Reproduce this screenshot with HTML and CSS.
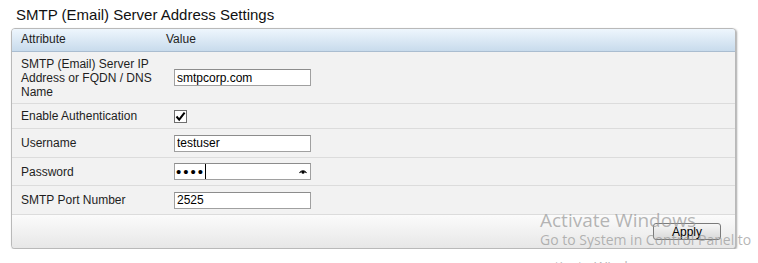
FILE: index.html
```html
<!DOCTYPE html>
<html lang="en">
<head>
  <meta charset="UTF-8">
  <meta name="viewport" content="width=device-width, initial-scale=1.0">
  <title>SMTP Settings</title>
  <link rel="stylesheet" href="styles.css">
</head>
<body>
  <h1 class="title">SMTP (Email) Server Address Settings</h1>

  <div class="panel">
    <div class="row head">
      <div class="attr">Attribute</div>
      <div class="value">Value</div>
    </div>

    <div class="row row-tall">
      <div class="attr attr-wrap">SMTP (Email) Server IP Address or FQDN / DNS Name</div>
      <div class="value"><input class="field" type="text" value="smtpcorp.com"></div>
    </div>

    <div class="row row-check">
      <div class="attr">Enable Authentication</div>
      <div class="value">
        <span class="checkbox" role="checkbox" aria-checked="true">
          <svg width="11" height="11" viewBox="0 0 11 11"><path d="M1.5 5.5 L4.2 8.6 L9.6 1.6" fill="none" stroke="#000" stroke-width="2"/></svg>
        </span>
      </div>
    </div>

    <div class="row row-a">
      <div class="attr">Username</div>
      <div class="value"><input class="field" type="text" value="testuser"></div>
    </div>

    <div class="row row-b">
      <div class="attr">Password</div>
      <div class="value">
        <span class="pass-wrap">
          <input class="field field-pass" type="password" value="test">
          <span class="caret"></span>
          <svg class="eye" width="8" height="5" viewBox="0 0 8 5"><path d="M0.5 4 Q4 -0.5 7.5 4" fill="none" stroke="#000" stroke-width="1.2"/><circle cx="4" cy="3.2" r="1.5" fill="#000"/></svg>
        </span>
      </div>
    </div>

    <div class="row row-a">
      <div class="attr">SMTP Port Number</div>
      <div class="value"><input class="field" type="text" value="2525"></div>
    </div>

    <div class="footer">
      <button class="apply-button" type="button">Apply</button>
    </div>
  </div>

  <div class="watermark">
    <p class="wm-big">Activate Windows</p>
    <p class="wm-small">Go to System in Control Panel to</p>
    <p class="wm-small wm-last">activate Windows.</p>
  </div>
</body>
</html>
```

FILE: styles.css
```css
:root {
  --row-bg: #f2f2f2;
  --row-line: #dcdcdc;
  --panel-border: #b9b9b9;
  --field-border: #a0a0a0;
  --sm: 12px;
}
body {
  margin: 0;
  font-family: "Liberation Sans", Arial, sans-serif;
  font-size: var(--sm);
  color: #1e1e1e;
  background: #fff;
  overflow: hidden;
}
.title {
  margin: 0;
  padding: 6px 0 4px 16px;
  font-size: 15px;
  font-weight: normal;
  line-height: 18px;
  color: #111;
}
.panel {
  margin-left: 11px;
  width: 725px;
  box-sizing: border-box;
  border: 1px solid var(--panel-border);
  border-radius: 4px;
  box-shadow: 1px 1px 2px rgba(0, 0, 0, 0.35);
  background: var(--row-bg);
  overflow: hidden;
}
.row {
  display: grid;
  grid-template-columns: 154px 1fr;
  align-items: center;
  box-sizing: border-box;
  border-bottom: 1px solid var(--row-line);
}
.head {
  height: 23px;
  background: linear-gradient(#eef6fd, #c8dbec);
  border-bottom-color: #aabdd0;
  padding-bottom: 2px;
}
.row-tall { height: 52px; }
.row-check { height: 25px; }
.row-a { height: 29px; }
.row-b { height: 28px; }
.attr {
  padding-left: 9px;
  padding-right: 8px;
}
.attr-wrap {
  line-height: 14px;
}
.field {
  margin-left: 8px;
  width: 137px;
  height: 17px;
  box-sizing: border-box;
  border: 1px solid var(--field-border);
  border-top-color: #8c8c8c;
  padding: 0 2px;
  font-family: "Liberation Sans", Arial, sans-serif;
  font-size: var(--sm);
  color: #000;
  background: #fff;
  outline: none;
  display: block;
}
.checkbox {
  margin-left: 8px;
  width: 13px;
  height: 13px;
  box-sizing: border-box;
  border: 1px solid #6e6e6e;
  background: #fff;
  display: flex;
  align-items: center;
  justify-content: center;
}
.pass-wrap {
  position: relative;
  display: block;
  width: 145px;
}
.field-pass {
  font-size: 15px;
  letter-spacing: 2px;
  padding-left: 1px;
}
.caret {
  position: absolute;
  left: 39px;
  top: 1px;
  width: 1px;
  height: 15px;
  background: #000;
}
.eye {
  position: absolute;
  left: 133px;
  top: 6px;
}
.footer {
  height: 33px;
  display: flex;
  justify-content: flex-end;
  align-items: flex-start;
  padding: 8px 14px 0 0;
  box-sizing: border-box;
  background: linear-gradient(#fbfbfb, #e7e7e7);
}
.apply-button {
  width: 68px;
  height: 17px;
  padding: 0;
  border: 1px solid #7a7a7a;
  border-radius: 3px;
  background: linear-gradient(#f7f7f7, #d9d9d9);
  font-family: "Liberation Sans", Arial, sans-serif;
  font-size: var(--sm);
  color: #000;
}
.watermark {
  position: absolute;
  left: 540px;
  top: 210px;
  font-family: "Open Sans", "Noto Sans", sans-serif;
  color: rgba(150, 150, 150, 0.7);
  pointer-events: none;
  white-space: nowrap;
}
.watermark p {
  margin: 0;
}
.wm-big {
  font-size: 19px;
  line-height: 20px;
}
.wm-small {
  font-size: 14px;
  line-height: 20px;
}
.watermark .wm-last {
  margin-top: 7px;
}
```
